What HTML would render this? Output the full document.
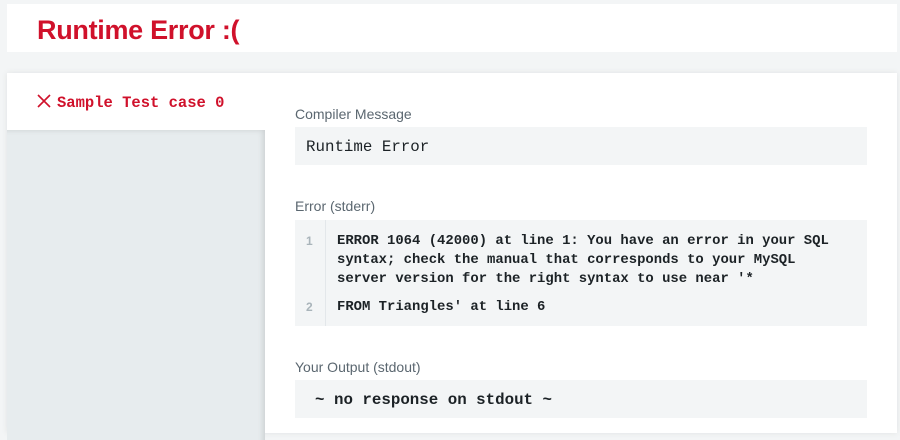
<!DOCTYPE html>
<html><head><style>
body{margin:0;width:900px;height:429px;background:#f3f5f6;font-family:"Liberation Sans",sans-serif;overflow:hidden;position:relative}
.hdr{position:absolute;left:7px;top:4px;width:890px;height:48px;background:#fff}
.hdr h1{margin:0;position:absolute;left:30px;top:11px;font-size:27px;color:#d0112b;font-weight:bold;letter-spacing:-0.3px}
.card{position:absolute;left:7px;top:73px;width:890px;height:360px;background:#fff;box-shadow:0 0 6px rgba(0,0,0,.08)}
.side{position:absolute;left:0;top:57px;width:258px;height:310px;background:#e7ecee;box-shadow:inset -6px 4px 6px -4px rgba(0,0,0,.12)}
.tab{position:absolute;left:30px;top:21px;color:#d0112b;font:bold 15.5px "Liberation Mono",monospace}
.lbl{position:absolute;left:288px;color:#5b6770;font-size:14px}
.box{position:absolute;left:288px;width:572px;background:#f3f5f6}
.mono{font-family:"Liberation Mono",monospace}
.ln{position:absolute;left:0;top:0;width:30px;height:100%;border-right:1px solid #e3e7ea}
.code{position:absolute;font:bold 13.9px/19px "Liberation Mono",monospace;color:#1c2226}
.num{position:absolute;left:11px;font:bold 12px "Liberation Sans",sans-serif;color:#a9b4ba}
</style></head><body>
<div class="hdr"><h1>Runtime Error :(</h1></div>
<div class="card">
<div class="side"></div>
<div class="tab"><svg width="14" height="14" viewBox="0 0 14 14" style="vertical-align:-1px;margin-right:6px"><path d="M1 1L13 13M13 1L1 13" stroke="#d0112b" stroke-width="1.6"/></svg>Sample Test case 0</div>
<div class="lbl" style="top:33px">Compiler Message</div>
<div class="box mono" style="top:54px;height:38px;font-size:15.8px;line-height:40px;color:#1c2226;padding-left:11px;box-sizing:border-box">Runtime Error</div>
<div class="lbl" style="top:125px">Error (stderr)</div>
<div class="box" style="top:147px;height:106px">
<div class="ln"></div>
<div class="num" style="top:14px">1</div>
<div class="num" style="top:80px">2</div>
<div class="code" style="left:42px;top:12px">ERROR 1064 (42000) at line 1: You have an error in your SQL<br>syntax; check the manual that corresponds to your MySQL<br>server version for the right syntax to use near '*</div>
<div class="code" style="left:42px;top:78px">FROM Triangles' at line 6</div>
</div>
<div class="lbl" style="top:286px">Your Output (stdout)</div>
<div class="box mono" style="top:307px;height:38px;font-weight:bold;font-size:15.8px;line-height:40px;color:#1c2226;padding-left:20px;box-sizing:border-box">~ no response on stdout ~</div>
</div>
</body></html>
